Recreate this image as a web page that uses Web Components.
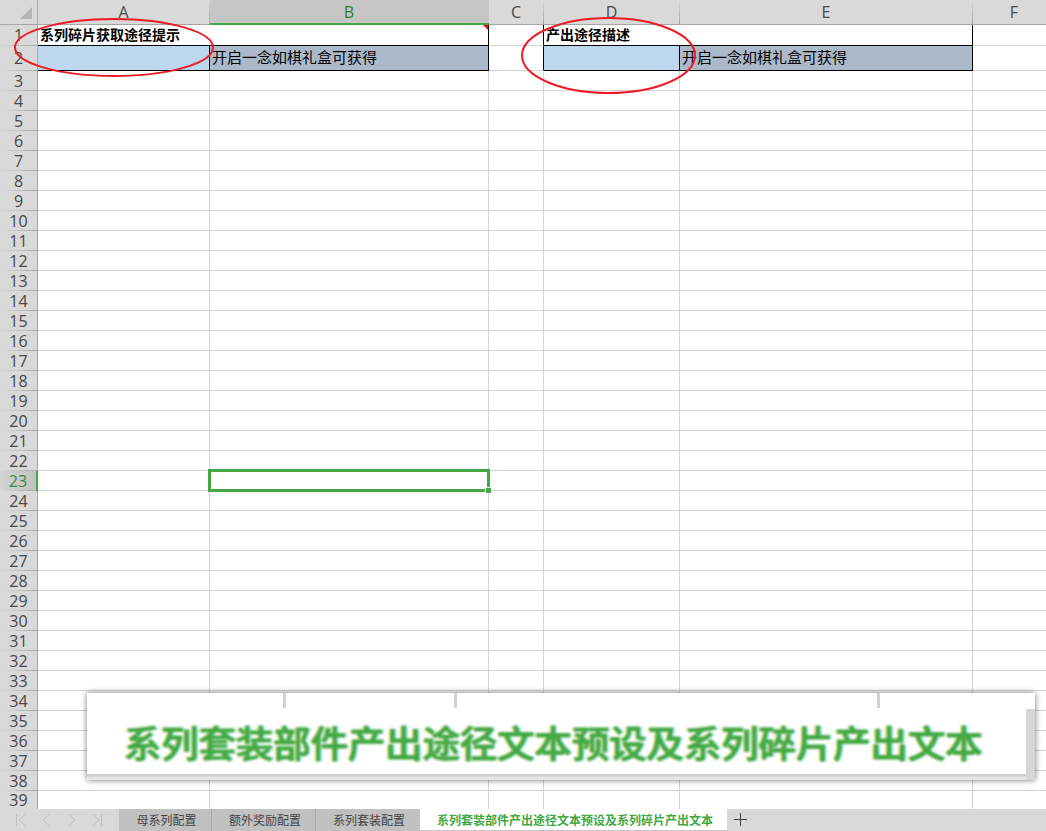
<!DOCTYPE html>
<html lang="zh-CN">
<head>
<meta charset="utf-8">
<title>系列配置</title>
<style>
html,body{margin:0;height:831px;overflow:hidden;background:#fff}
body{font-family:"Open Sans","Noto Sans CJK SC",sans-serif}
</style>
</head>
<body>
<sheet-app></sheet-app>
<script>
const define = (name, css, html) => customElements.define(name, class extends HTMLElement {
  constructor() {
    super();
    this.attachShadow({mode: 'open'}).innerHTML = `<style>${css}</style>${html}`;
  }
});

define('column-head', `
:host{display:block;box-sizing:border-box;height:25px;line-height:25px;text-align:center;font-size:16px;color:#484848;background:linear-gradient(#d7d7d7,#a6a6a6) right/1px 100% no-repeat,#d9d9d9;border-bottom:1px solid #a6a6a6;padding-right:1px}
:host([selected]){background:#c6c6c6;color:#2f7d3b;border-bottom:2px solid #43a843}
span{display:block;height:23px}
`, '<span><slot></slot></span>');

define('row-head', `
:host{display:block;box-sizing:border-box;width:38px;text-align:center;font-size:16px;color:#484848;background:linear-gradient(90deg,#d9d9d9,#aaa) bottom/100% 1px no-repeat,#d9d9d9;border-right:1px solid #a6a6a6}
:host([selected]){background:linear-gradient(90deg,#d9d9d9,#aaa) bottom/100% 1px no-repeat,linear-gradient(90deg,#d2d2d2,#c2c2c2);color:#2f8d3b;border-right:2px solid #43a843}
:host([last]){background:#d9d9d9}
span{display:flex;height:100%;align-items:center;justify-content:center;line-height:18px;padding-bottom:1px;box-sizing:border-box}
:host([last]) span{padding:0}
`, '<span><slot></slot></span>');

define('sheet-cell', `
:host{display:block;box-sizing:border-box;min-width:0;border-right:1px solid #d4d4d4;border-bottom:1px solid #d4d4d4;background:#fff;color:#000;font:15px/21px "Noto Sans CJK SC",sans-serif;padding-left:2px;white-space:nowrap}
:host([title-cell]){font-size:14px;font-weight:700;line-height:18px;border-color:#000;grid-column:span 2;position:relative}
:host([edge]){border-right-color:#000}
:host([last]){border-bottom:0}
:host([tone=blue]){background:#bdd7ee;border-color:#000}
:host([tone=slate]){background:#acb9ca;border-color:#000}
:host([note])::after{content:"";position:absolute;right:0;top:0;border-top:5px solid #f00;border-left:5px solid transparent}
`, '<slot></slot>');

define('corner-cell', `
:host{display:flex;justify-content:flex-end;box-sizing:border-box;width:38px;height:25px;background:#d9d9d9;border-right:1px solid #a6a6a6;border-bottom:1px solid #a6a6a6;padding:7px 5px 0 0}
svg{display:block}
`, '<svg width="12" height="12"><path d="M12 0V12H0Z" fill="#b4b4b4"/></svg>');

define('cell-selection', `
:host{display:block;position:absolute;box-sizing:border-box;left:208px;top:469px;width:282px;height:23px;border:3px solid #43a843}
i{position:absolute;right:-4px;bottom:-4px;width:5px;height:5px;background:#43a843;border:solid #fff;border-width:1px 0 0 1px}
`, '<i></i>');

define('sheet-grid', `
:host{display:block;height:809px;overflow:hidden;background:#fff}
.grid{display:grid;width:1056px;grid-template-columns:38px 172px 279px 55px 136px 293px 83px;grid-template-rows:25px 21px 25px repeat(36,20px) 18px}
`, (() => {
  let h = '<corner-cell></corner-cell>' + [...'ABCDEF'].map(c => `<column-head${c === 'B' ? ' selected' : ''}>${c}</column-head>`).join('');
  h += '<row-head>1</row-head><sheet-cell title-cell note>系列碎片获取途径提示</sheet-cell><sheet-cell edge></sheet-cell><sheet-cell title-cell>产出途径描述</sheet-cell><sheet-cell></sheet-cell>';
  h += '<row-head>2</row-head><sheet-cell tone="blue"></sheet-cell><sheet-cell tone="slate">开启一念如棋礼盒可获得</sheet-cell><sheet-cell edge></sheet-cell><sheet-cell tone="blue"></sheet-cell><sheet-cell tone="slate">开启一念如棋礼盒可获得</sheet-cell><sheet-cell></sheet-cell>';
  for (let r = 3; r <= 39; r++) {
    const last = r === 39 ? ' last' : '';
    h += `<row-head${r === 23 ? ' selected' : ''}${last}>${r}</row-head>` + `<sheet-cell${last}></sheet-cell>`.repeat(6);
  }
  return `<div class="grid">${h}</div>`;
})());

define('red-marks', `
:host{display:block;position:absolute;left:0;top:0;pointer-events:none}
svg{display:block}
`, `<svg width="1046" height="110" fill="none" stroke="#ed1c24" stroke-width="2">
<ellipse cx="114" cy="47.5" rx="99" ry="28.5"/><ellipse cx="608.5" cy="55.5" rx="86.5" ry="37.5"/></svg>`);

define('zoom-callout', `
:host{display:block;position:absolute;box-sizing:border-box;left:87px;top:693px;width:948px;height:87px;background:#fff;box-shadow:0 0 6px rgba(0,0,0,.55)}
.frame{display:grid;height:100%;grid-template-columns:1fr 9px;grid-template-rows:16px 65px 6px}
.ticks{grid-column:1/3;filter:blur(.5px);background:linear-gradient(#d2d2d2,#d2d2d2) 196px 0/3px 15px no-repeat,linear-gradient(#d2d2d2,#d2d2d2) 367px 0/3px 15px no-repeat,linear-gradient(#d2d2d2,#d2d2d2) 790px 0/3px 15px no-repeat}
.text{padding-left:37px;font:500 37.35px/65px "Noto Sans CJK SC",sans-serif;color:#43a843;white-space:nowrap;text-shadow:-2px 0 1px rgba(245,205,70,.6),2px 0 1px rgba(70,220,240,.6)}
.text span{display:block;filter:blur(.8px);-webkit-text-stroke:.8px #43a843;margin-top:1px}
.side{background:#d6d6d6;grid-row:2/4;grid-column:2}
.base{background:linear-gradient(#d0d0d0 0,#cecece 2px,#e6e6e6 3px,#e6e6e6)}
`, '<div class="frame"><div class="ticks"></div><div class="text"><span><slot></slot></span></div><div class="side"></div><div class="base"></div></div>');

define('sheet-tab', `
:host{display:block;box-sizing:border-box;height:22px;background:#c1c1c1;color:#444;border-right:1px solid #a9a9a9;font:12px/21px "Noto Sans CJK SC",sans-serif;text-align:center;white-space:nowrap;padding-left:3px}
:host([last]){border-right-color:#c1c1c1}
:host([active]){background:#fff;color:#43a843;font-weight:700;border-right:0;border-bottom:1px solid #c6c6c6}
`, '<slot></slot>');

define('tab-bar', `
:host{display:grid;grid-template-columns:119px 93px 104px 104px 307px 1fr;height:22px;background:#d9d9d9}
svg{display:block}
`, `<svg width="119" height="22" fill="none" stroke="#bfbfbf" stroke-width="1"><path d="M16.5 5V17M25 5.5L19 11L25 16.5M49 5.5L43 11L49 16.5M69 5.5L75 11L69 16.5M93 5.5L99 11L93 16.5M101.500 5V17"/></svg>
<sheet-tab>母系列配置</sheet-tab><sheet-tab>额外奖励配置</sheet-tab><sheet-tab last>系列套装配置</sheet-tab><sheet-tab active>系列套装部件产出途径文本预设及系列碎片产出文本</sheet-tab>
<svg width="40" height="22" stroke="#404040"><path d="M7 10.500H20M13.500 4V17"/></svg>`);

define('sheet-app', `
:host{display:block;position:relative;width:1046px;height:831px;overflow:hidden}
`, `<sheet-grid></sheet-grid><tab-bar></tab-bar><cell-selection></cell-selection><red-marks></red-marks><zoom-callout>系列套装部件产出途径文本预设及系列碎片产出文本</zoom-callout>`);
</script>
</body>
</html>
